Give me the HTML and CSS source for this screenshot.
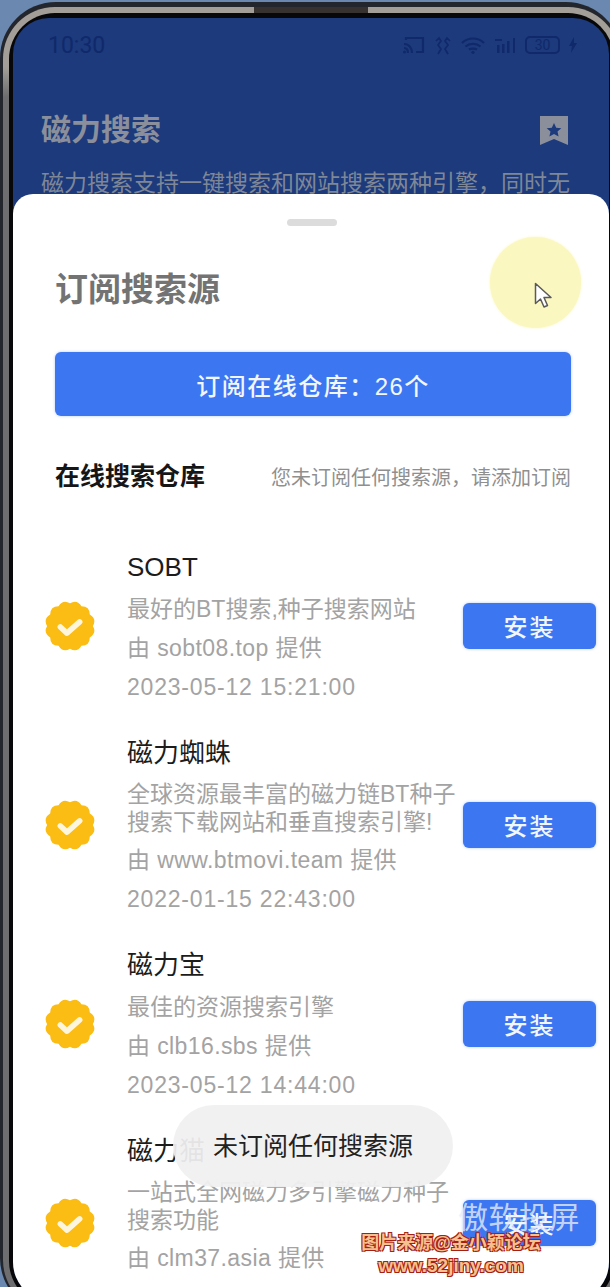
FILE: index.html
```html
<!DOCTYPE html>
<html lang="zh-CN">
<head>
<meta charset="utf-8">
<title>订阅搜索源</title>
<link rel="stylesheet" href="styles.css">
</head>
<body>
<div class="stage">
  <div class="device">
    <div class="speaker"></div>
    <div class="band">
      <div class="bezel">
        <div class="screen">
          <div class="backdrop">
            <div class="status">
              <span class="time">10:30</span>
              <div class="status-icons">
                <svg width="22" height="18" viewBox="0 0 22 18" fill="none" stroke="#10296a" stroke-width="2.200"><path d="M3 4V2h17v14h-7M1 8c5 0 8 4 8 9M1 12c3 0 4 2 4 5"/><circle cx="1.500" cy="16" r="1.500" fill="#10296a" stroke="none"/></svg>
                <svg width="18" height="19" viewBox="0 0 18 19" fill="none" stroke="#10296a" stroke-width="1.700"><path d="M2 5l3-3 2 3-3 4 3 4-3 5M16 5l-3-3-2 3 3 4-3 4 3 5"/></svg>
                <svg width="24" height="17" viewBox="0 0 24 17" fill="none" stroke="#10296a" stroke-width="2.200"><path d="M1 6c6-6 16-6 22 0M4.500 9.500c4-3.500 11-3.500 15 0M8 12.500c2-1.300 6-1.300 8 0"/><circle cx="12" cy="15.300" r="1.600" fill="#10296a" stroke="none"/></svg>
                <svg width="22" height="17" viewBox="0 0 22 17" fill="#10296a"><rect x="3" y="8" width="2.500" height="8"/><rect x="8" y="7" width="2.500" height="9"/><rect x="13" y="4" width="2.500" height="12"/><rect x="19" y="1" width="2" height="15"/><rect x="1" y="2" width="7" height="2"/></svg>
                <div class="battery">30</div>
                <svg width="8" height="16" viewBox="0 0 8 16" fill="#10296a"><path d="M5 0L0 9h3l-1 7 6-10H5z"/></svg>
              </div>
            </div>
            <div class="app-head">
              <span class="app-title">磁力搜索</span>
              <svg width="28" height="29" viewBox="0 0 28 29"><path d="M0 0h28v29l-14-6-14 6z" fill="#8a8f9b"/><path d="M14 7l2.200 4.700 5.100.5-3.800 3.400 1.100 5-4.600-2.600-4.600 2.600 1.100-5-3.800-3.400 5.100-.5z" fill="#1c3a7c"/></svg>
            </div>
            <p class="app-desc">磁力搜索支持一键搜索和网站搜索两种引擎，同时无</p>
          </div>

          <section class="sheet">
            <div class="grabber"></div>
            <h1 class="sheet-title">订阅搜索源</h1>
            <button class="primary">订阅在线仓库：26个</button>
            <div class="repo-head">
              <h2>在线搜索仓库</h2>
              <span>您未订阅任何搜索源，请添加订阅</span>
            </div>
            <div class="list">
              <article class="item">
                <svg class="badge" viewBox="0.400 0.400 49.200 49.200"><use href="#seal"/></svg>
                <div class="info">
                  <h3>SOBT</h3>
                  <p>最好的BT搜索,种子搜索网站</p>
                  <p class="source">由 sobt08.top 提供</p>
                  <p class="date">2023-05-12 15:21:00</p>
                </div>
                <button class="install">安装</button>
              </article>
              <article class="item">
                <svg class="badge" viewBox="0.400 0.400 49.200 49.200"><use href="#seal"/></svg>
                <div class="info">
                  <h3>磁力蜘蛛</h3>
                  <p class="tight">全球资源最丰富的磁力链BT种子<br>搜索下载网站和垂直搜索引擎!</p>
                  <p class="source">由 www.btmovi.team 提供</p>
                  <p class="date">2022-01-15 22:43:00</p>
                </div>
                <button class="install">安装</button>
              </article>
              <article class="item">
                <svg class="badge" viewBox="0.400 0.400 49.200 49.200"><use href="#seal"/></svg>
                <div class="info">
                  <h3>磁力宝</h3>
                  <p>最佳的资源搜索引擎</p>
                  <p class="source">由 clb16.sbs 提供</p>
                  <p class="date">2023-05-12 14:44:00</p>
                </div>
                <button class="install">安装</button>
              </article>
              <article class="item item-last">
                <svg class="badge" viewBox="0.400 0.400 49.200 49.200"><use href="#seal"/></svg>
                <div class="info">
                  <h3>磁力猫</h3>
                  <p class="tight">一站式全网磁力多引擎磁力种子<br>搜索功能</p>
                  <p class="source">由 clm37.asia 提供</p>
                </div>
                <button class="install">安装</button>
              </article>
            </div>
          </section>
        </div>
      </div>
    </div>
  </div>

  <div class="toast">未订阅任何搜索源</div>
  <div class="cursor-halo">
    <svg width="20" height="27" viewBox="0 0 20 27"><path d="M1.500 1.500v20l5-4.500 3.500 8 3.500-1.500-3.500-8h7z" fill="#fff" stroke="#5a5a5a" stroke-width="1.500" stroke-linejoin="round"/></svg>
  </div>
  <div class="cast-mark">傲软投屏</div>
  <div class="source-mark"><span>图片来源@金小颖论坛</span><span class="source-url">www.52jiny.com</span></div>
</div>

<svg class="defs" width="0" height="0">
  <defs>
    <g id="seal">
      <path d="M47.500 25Q51.560 32.120 44.490 36.250Q44.450 44.450 36.250 44.490Q32.120 51.560 25 47.500Q17.880 51.560 13.750 44.490Q5.550 44.450 5.510 36.250Q-1.560 32.120 2.500 25Q-1.560 17.880 5.510 13.750Q5.550 5.550 13.750 5.510Q17.880 -1.560 25 2.500Q32.120 -1.560 36.250 5.510Q44.450 5.550 44.490 13.750Q51.560 17.880 47.500 25Z" fill="#fbbc13"/>
      <path d="M15.500 26l6.500 6L34.500 21" fill="none" stroke="#fdf6dd" stroke-width="5.500" stroke-linecap="round" stroke-linejoin="round"/>
    </g>
  </defs>
</svg>
</body>
</html>
```
FILE: styles.css
```css
* { box-sizing: border-box; }
html, body { margin: 0; padding: 0; }
body {
  width: 610px;
  height: 1287px;
  overflow: hidden;
  background: #6b89b0;
  font-family: "Liberation Sans", "Noto Sans CJK SC", sans-serif;
}
.stage {
  position: relative;
  width: 610px;
  height: 1287px;
  overflow: hidden;
}
.device {
  position: relative;
  width: 622px;
  height: 1312px;
  margin-top: 2px;
  padding: 5px 2px 2px 3px;
  background: #23262c;
  border-radius: 56px;
}
.speaker {
  position: absolute;
  left: 254px; top: 5px;
  width: 114px; height: 6px;
  background: #37322f;
  z-index: 2;
}
.band {
  height: 100%;
  padding: 6px 6px 5px;
  background: linear-gradient(#a39f98 0 60px, #6e6e70 90px);
  border-radius: 52px;
}
.bezel {
  height: 100%;
  padding: 5px 5px 5px 4px;
  background: #08080a;
  border-radius: 46px;
}
.screen {
  position: relative;
  height: 100%;
  background: #1c3a7c;
  border-radius: 36px 36px 40px 40px;
  overflow: hidden;
}
.backdrop { height: 176px; padding: 0 41px 0 28px; color: #8a8f9b; }
.status {
  height: 54px;
  padding-left: 7px;
  margin-right: -9px;
  display: flex;
  justify-content: space-between;
  align-items: center;
  color: #10296a;
}
.time { font: 23px "Roboto", sans-serif; }
.status-icons { display: flex; align-items: center; gap: 9px; }
.battery {
  width: 35px; height: 18px;
  border: 2px solid #10296a;
  border-radius: 5px;
  font: 14px/14px "Roboto", sans-serif;
  text-align: center;
}
.app-head {
  margin-top: 40px;
  display: flex;
  justify-content: space-between;
  align-items: center;
}
.app-title { font-size: 30px; font-weight: 700; line-height: 36px; }
.app-desc { margin: 20px 0 0; font-size: 23px; line-height: 30px; white-space: nowrap; color: #7f8796; }

.sheet {
  position: absolute;
  left: 0; right: 0; top: 176px;
  height: 1110px;
  background: #fff;
  border-radius: 20px 20px 0 0;
  padding: 0 40px 0 42px;
}
.grabber {
  width: 50px; height: 7px;
  margin: 25px auto 0;
  background: #dcdcdc;
  border-radius: 4px;
}
.sheet-title {
  margin: 41px 0 0;
  font-size: 33px;
  font-weight: 700;
  line-height: 46px;
  color: #737373;
}
.primary {
  display: block;
  width: 516px;
  height: 64px;
  margin-top: 39px;
  border: 0;
  border-radius: 6px;
  background: #3c76f1;
  box-shadow: 0 0 3px rgba(60, 120, 240, .4);
  color: #f2f6ff;
  font: 500 24px "Liberation Sans", "Noto Sans CJK SC", sans-serif;
  letter-spacing: 1.500px;
}
.repo-head {
  width: 516px;
  margin-top: 42px;
  display: flex;
  justify-content: space-between;
  align-items: center;
}
.repo-head h2 { margin: 0; font-size: 25px; line-height: 36px; color: #161616; }
.repo-head span { font-size: 20px; color: #8f8f8f; white-space: nowrap; }

.list {
  margin: 55px 0 0 -10px;
  width: 551px;
  display: flex;
  flex-direction: column;
  gap: 28px;
}
.item {
  display: grid;
  grid-template-columns: 50px minmax(0, 1fr) 133px;
  column-gap: 32px;
  align-items: center;
}
.item-last { min-height: 184px; }
.item-last .info { align-self: start; }
.info { min-width: 0; }
.info h3 { margin: 0 0 4px; font-size: 26px; font-weight: 400; line-height: 37px; color: #1c1c1c; }
.info p { margin: 0; font-size: 23px; line-height: 39px; color: #a3a3a3; white-space: nowrap; }
.info p.tight { line-height: 28px; margin: 8px 0 5px; }
.info p.source { letter-spacing: .4px; }
.info p.date { letter-spacing: .8px; }
.badge { width: 50px; height: 50px; display: block; margin-bottom: 4px; }
.install {
  width: 133px;
  height: 46px;
  margin-bottom: 5px;
  border: 0;
  border-radius: 6px;
  background: #3c76f1;
  box-shadow: 0 0 3px rgba(60, 120, 240, .4);
  color: #f2f6ff;
  font: 500 24px "Liberation Sans", "Noto Sans CJK SC", sans-serif;
  letter-spacing: 2px;
}

.toast {
  position: absolute;
  left: 173px; top: 1105px;
  width: 280px; height: 82px;
  border-radius: 41px;
  background: rgba(240, 240, 241, .94);
  color: #222;
  font-size: 25px;
  line-height: 82px;
  text-align: center;
}
.cursor-halo {
  position: absolute;
  left: 490px; top: 237px;
  width: 91px; height: 91px;
  padding: 45px 0 0 44px;
  border-radius: 50%;
  background: #fbf7c0;
  box-shadow: 0 0 3px #fbf7c0;
}
.cursor-halo svg { display: block; }
.cast-mark {
  position: absolute;
  left: 458px; top: 1198px;
  font-size: 30px;
  line-height: 40px;
  color: rgba(232, 237, 248, .8);
  letter-spacing: .5px;
}
.source-mark {
  position: absolute;
  left: 341px; top: 1231px;
  width: 220px;
  display: flex;
  flex-direction: column;
  align-items: center;
  font-size: 18px;
  font-weight: 700;
  line-height: 24px;
  color: #f6c08f;
  text-shadow: 1px 1px 0 #a61f14, -1px -1px 0 #a61f14, 1px -1px 0 #a61f14, -1px 1px 0 #a61f14;
}
.source-url { font-size: 19px; line-height: 22px; }
.defs { position: absolute; }
```
